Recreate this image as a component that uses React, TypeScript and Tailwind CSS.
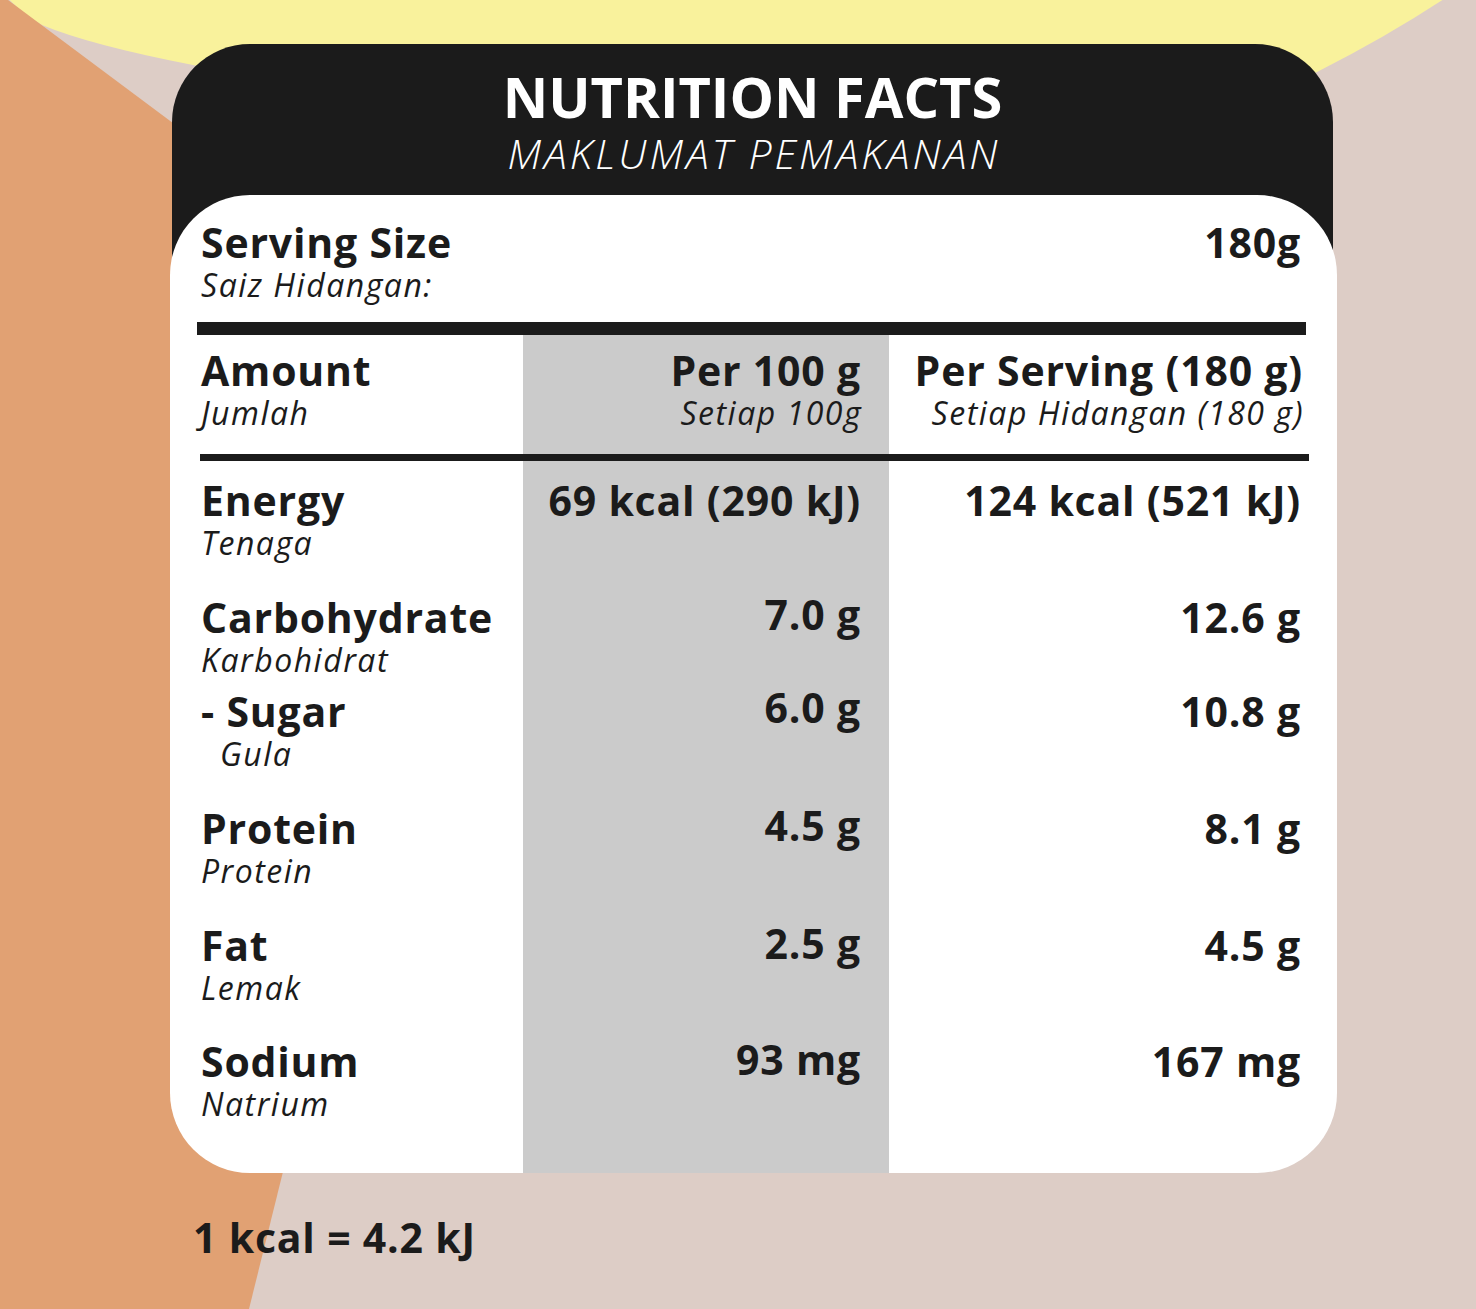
import React from "react";

type Row = {
  en: string;
  ms: string;
  v1: string;
  v2: string;
  h: string;
  indent?: boolean;
  lift: string;
};

const rows: Row[] = [
  { en: "Energy", ms: "Tenaga", v1: "69 kcal (290 kJ)", v2: "124 kcal (521 kJ)", h: "h-[117px]", lift: "mt-0" },
  { en: "Carbohydrate", ms: "Karbohidrat", v1: "7.0 g", v2: "12.6 g", h: "h-[94px]", lift: "-mt-[3px]" },
  { en: "- Sugar", ms: "Gula", v1: "6.0 g", v2: "10.8 g", h: "h-[117px]", indent: true, lift: "-mt-[4px]" },
  { en: "Protein", ms: "Protein", v1: "4.5 g", v2: "8.1 g", h: "h-[117px]", lift: "-mt-[3px]" },
  { en: "Fat", ms: "Lemak", v1: "2.5 g", v2: "4.5 g", h: "h-[116px]", lift: "-mt-[2px]" },
  { en: "Sodium", ms: "Natrium", v1: "93 mg", v2: "167 mg", h: "h-[116px]", lift: "-mt-[2px]" },
];

const bold = "font-bold text-[41px] leading-[41px] tracking-[0.8px] text-[#1b1b1b] whitespace-nowrap";
const ital = "italic text-[32px] leading-[32px] tracking-[1.5px] text-[#1b1b1b] whitespace-nowrap";

export default function App() {
  return (
    <div className="relative w-[1476px] h-[1309px] overflow-hidden bg-[#ddcdc6] font-['Open_Sans',sans-serif]">
      <svg
        className="absolute inset-0"
        width="1476"
        height="1309"
        viewBox="0 0 1476 1309"
      >
        <path
          d="M 5 -5 Q 22 14 42 25 Q 90 45 193 65 L 300 85 L 1250 100 L 1317 72 Q 1390 35 1450 -5 Z"
          fill="#f9f29c"
        />
        <polygon points="0,-6 485,356 249,1309 0,1309" fill="#e1a173" />
      </svg>

      <div className="relative flex flex-col pt-[44px] pl-[170px]">
        <div className="w-[1167px] flex flex-col">
          {/* black header */}
          <div className="ml-[2px] mr-[4px] h-[231px] rounded-t-[78px] bg-[#1b1b1b] flex flex-col items-center pt-[24px] text-white">
            <div className="font-bold text-[56px] leading-[56px] whitespace-nowrap">NUTRITION FACTS</div>
            <div className="mt-[9px] pl-[3px] font-light italic text-[41px] leading-[41px] tracking-[3px] whitespace-nowrap">
              MAKLUMAT PEMAKANAN
            </div>
          </div>

          {/* white panel */}
          <div className="-mt-[80px] h-[978px] rounded-[80px] bg-white flex flex-col overflow-hidden relative">
            <div className="flex justify-between items-start pt-[27px] pl-[31px] pr-[36px]">
              <div className="flex flex-col">
                <div className={bold}>Serving Size</div>
                <div className={`${ital} mt-[6px]`}>Saiz Hidangan:</div>
              </div>
              <div className={bold}>180g</div>
            </div>

            <div className="mt-[21px] ml-[27px] mr-[31px] h-[13px] bg-[#1b1b1b]" />

            <div className="flex-1 flex flex-col bg-[linear-gradient(90deg,transparent_353px,#cbcbcb_353px,#cbcbcb_719px,transparent_719px)]">
              {/* header row */}
              <div className="grid grid-cols-[353px_366px_1fr] pt-[15px]">
                <div className="pl-[31px] flex flex-col">
                  <div className={bold}>Amount</div>
                  <div className={`${ital} mt-[6px]`}>Jumlah</div>
                </div>
                <div className="pr-[28px] flex flex-col items-end">
                  <div className={bold}>Per 100 g</div>
                  <div className={`${ital} mt-[6px] -mr-[1px]`}>Setiap 100g</div>
                </div>
                <div className="pr-[34px] flex flex-col items-end">
                  <div className={bold}>Per Serving (180 g)</div>
                  <div className={`${ital} mt-[6px] -mr-[1px]`}>Setiap Hidangan (180 g)</div>
                </div>
              </div>

              <div className="mt-[25px] ml-[30px] mr-[28px] h-[7px] bg-[#1b1b1b]" />

              <div className="flex flex-col pt-[19px]">
                {rows.map((r) => (
                  <div key={r.en} className={`grid grid-cols-[353px_366px_1fr] ${r.h}`}>
                    <div className="pl-[31px] flex flex-col">
                      <div className={bold}>{r.en}</div>
                      <div className={`${ital} mt-[6px] ${r.indent ? "pl-[19px]" : ""}`}>{r.ms}</div>
                    </div>
                    <div className={`pr-[28px] flex justify-end ${r.lift}`}>
                      <div className={bold}>{r.v1}</div>
                    </div>
                    <div className="pr-[36px] flex justify-end">
                      <div className={bold}>{r.v2}</div>
                    </div>
                  </div>
                ))}
              </div>
            </div>
          </div>
        </div>

        <div className={`${bold} mt-[44px] pl-[23px]`}>1 kcal = 4.2 kJ</div>
      </div>
    </div>
  );
}
